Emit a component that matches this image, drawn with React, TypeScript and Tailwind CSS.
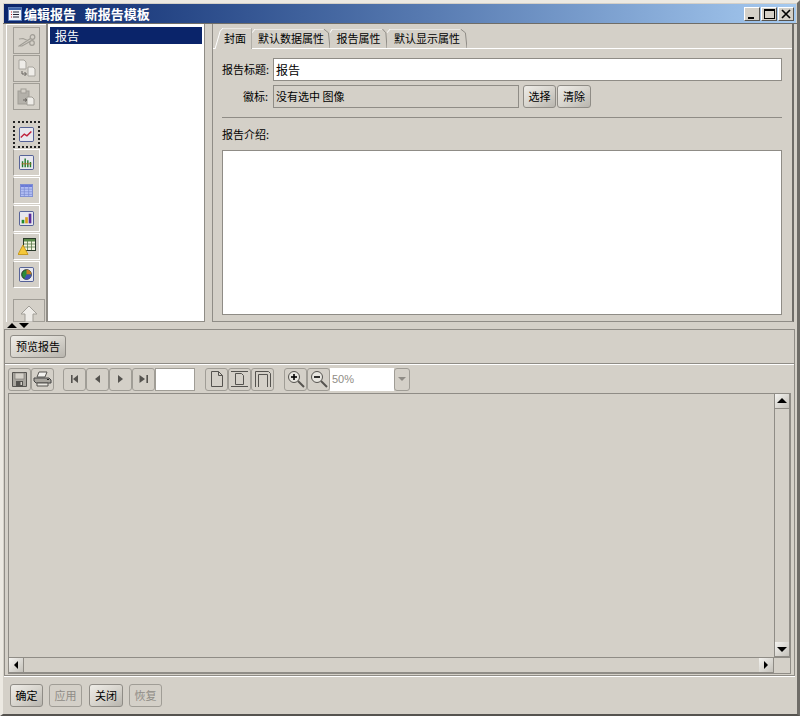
import type { ReactNode } from "react";

const font = { fontFamily: '"Noto Sans CJK SC", "Liberation Sans", sans-serif' };

function ToolBtn({ children, dotted, wide, enabled }: { children: ReactNode; dotted?: boolean; wide?: boolean; enabled?: boolean }) {
  const edge = dotted
    ? "border-2 border-dotted border-[#222]"
    : enabled
      ? "border border-white border-l-[#a09d96]"
      : "border border-[#a09d96]";
  return <div className={`${wide ? "w-[32px] h-[23px]" : "w-[27px] h-[27px]"} flex items-center justify-center ${edge}`}>{children}</div>;
}

function GrayBtn({ children, w = "w-[23px]" }: { children: ReactNode; w?: string }) {
  return (
    <div className={`${w} h-[23px] shrink-0 flex items-center justify-center rounded-[3px] border border-[#a09d96]`}>
      {children}
    </div>
  );
}

function TextBtn({ label, w, disabled }: { label: string; w: string; disabled?: boolean }) {
  return (
    <div
      className={`${w} h-[23px] shrink-0 flex items-center justify-center rounded-[3px] border text-[11px] ${
        disabled
          ? "border-[#a09d96] text-[#8f8c86]"
          : "border-[#8f8c86] text-black bg-gradient-to-br from-[#eeece7] via-[#d8d5ce] to-[#b8b5ae]"
      }`}
    >
      {label}
    </div>
  );
}

function Tab({ label, w, active }: { label: string; w: string; active?: boolean }) {
  return (
    <div className={`relative ${w} ${active ? "h-[21px] -mb-px z-10 bg-[#d4d0c8] pl-[3px] pb-[3px]" : "h-[19px] pb-[2px]"} flex items-end justify-center text-[11px] text-black`}>
      <svg className="absolute inset-0 w-full h-full" preserveAspectRatio="none" viewBox="0 0 100 20">
        <path d={active ? "M0 20 L14 3 L22 0 L100 0" : "M0 4 L4 0 L92 0"} fill="none" stroke="#fff" strokeWidth="1" vectorEffect="non-scaling-stroke" />
        <path d={active ? "M100 0 L100 20" : "M92 0 L98 4 L100 20"} fill="none" stroke="#8f8c86" strokeWidth="1" vectorEffect="non-scaling-stroke" />
      </svg>
      <span className="relative">{label}</span>
    </div>
  );
}

function Arrow({ dir }: { dir: "left" | "right" | "up" | "down" }) {
  const d = { left: "M7 1 L3 5 L7 9 Z", right: "M3 1 L7 5 L3 9 Z", up: "M0 7 L5 2 L10 7 Z", down: "M0 3 L5 8 L10 3 Z" }[dir];
  return (
    <svg width="10" height="10" viewBox="0 0 10 10">
      <path d={d} fill="#000" />
    </svg>
  );
}

function ScrollBtn({ dir }: { dir: "left" | "right" | "up" | "down" }) {
  return (
    <div className="w-[15px] h-[15px] shrink-0 flex items-center justify-center bg-gradient-to-br from-[#f4f3f0] to-[#c4c1ba] border-r border-b border-[#8f8c86]">
      <Arrow dir={dir} />
    </div>
  );
}

export default function App() {
  return (
    <div
      style={font}
      className="w-[800px] h-[716px] bg-[#d4d0c8] flex flex-col overflow-hidden border-x-[3px] border-t-[3px] border-b-2 border-t-[#ece9e2] border-l-[#ece9e2] border-r-[#6f6d68] border-b-[#55534f]"
    >
      {/* Title bar */}
      <div className="mt-px mx-px h-[19px] shrink-0 flex items-center bg-gradient-to-r from-[#0a246a] to-[#a6caf0] pl-[4px] pr-[2px]">
        <svg width="14" height="14" viewBox="0 0 14 14">
          <rect x="0.5" y="0.5" width="13" height="13" fill="#f2f4fa" stroke="#5b7db8" />
          <rect x="1" y="1" width="12" height="2" fill="#3d63a8" />
          <path d="M3 5h1M3 7.5h1M3 10h1" stroke="#c22" />
          <path d="M5 5h6M5 7.5h6M5 10h6" stroke="#223" />
        </svg>
        <span className="ml-[2px] text-[13px] font-bold text-white whitespace-pre">编辑报告   新报告模板</span>
        <div className="ml-auto flex gap-px">
          <WinBtn>
            <div className="w-[6px] h-[2px] bg-black mt-[8px] -ml-[2px]" />
          </WinBtn>
          <WinBtn>
            <div className="w-[11px] h-[10px] border border-black border-t-2" />
          </WinBtn>
          <WinBtn>
            <svg width="10" height="10" viewBox="0 0 10 10">
              <path d="M1 1 L9 9 M9 1 L1 9" stroke="#000" strokeWidth="1.7" />
            </svg>
          </WinBtn>
        </div>
      </div>
      <div className="h-px bg-[#6f6d68] shrink-0" />

      {/* Top split */}
      <div className="h-[298px] shrink-0 flex pl-[3px] pr-[3px]">
        <div className="w-[40px] shrink-0 flex flex-col items-start pl-[6px] pt-[2px] overflow-hidden border-l border-t border-white">
          <div className="flex flex-col gap-px">
            <ToolBtn><ScissorsIcon /></ToolBtn>
            <ToolBtn><CopyIcon /></ToolBtn>
            <ToolBtn><PasteIcon /></ToolBtn>
          </div>
          <div className="flex flex-col gap-px mt-[11px]">
            <ToolBtn dotted><FrameIcon><path d="M2 12 L6 8 L9 10 L14 5" stroke="#c0203a" strokeWidth="1.6" fill="none" /></FrameIcon></ToolBtn>
            <ToolBtn enabled><FrameIcon><path d="M4 14V7M7 14V4M10 14V6M13 14V8" stroke="#1f7a2a" strokeWidth="1.6" /><path d="M3 10H14" stroke="#b06a20" /></FrameIcon></ToolBtn>
            <ToolBtn enabled><TableIcon /></ToolBtn>
            <ToolBtn enabled><FrameIcon><rect x="3" y="10" width="3" height="4" fill="#1f8a2a" /><rect x="7" y="7" width="3" height="7" fill="#d8a020" /><rect x="11" y="3" width="3" height="11" fill="#5a2a9a" /></FrameIcon></ToolBtn>
            <ToolBtn enabled><AlertTableIcon /></ToolBtn>
            <ToolBtn enabled><FrameIcon><circle cx="8.5" cy="8.5" r="5.5" fill="#2a8a3a" stroke="#222" /><path d="M8.5 8.5 L8.5 3 A5.5 5.5 0 0 1 14 8.5 Z" fill="#c87a20" /><path d="M8.5 8.5 L14 8.5 A5.5 5.5 0 0 1 6 13.5 Z" fill="#4050b0" /></FrameIcon></ToolBtn>
          </div>
          <div className="mt-[11px]">
            <ToolBtn wide>
              <svg width="18" height="18" viewBox="0 0 18 18" className="mt-[6px]">
                <path d="M9 1 L17 9 H13 V17 H5 V9 H1 Z" fill="#eeece8" stroke="#a09d96" />
              </svg>
            </ToolBtn>
          </div>
        </div>

        <div className="w-[2px] shrink-0 bg-[#8f8c86]" />
        <div className="w-[156px] shrink-0 bg-white p-[2px] pt-[3px] border-b border-[#8f8c86]">
          <div className="h-[17px] bg-[#0a246a] text-white text-[12px] leading-[17px] pl-[5px]">报告</div>
        </div>
        <div className="w-[8px] shrink-0 border-l border-[#8f8c86]" />

        {/* Tabbed panel */}
        <div className="flex-1 flex flex-col min-w-0 pt-[4px] border-b border-l border-[#8f8c86] border-r-2 border-r-[#6f6d68]">
          <div className="h-[21px] shrink-0 flex items-end pl-[2px] border-b border-white">
            <Tab label="封面" w="w-[37px]" active />
            <Tab label="默认数据属性" w="w-[78px]" />
            <Tab label="报告属性" w="w-[57px]" />
            <Tab label="默认显示属性" w="w-[80px]" />
          </div>
          <div className="flex-1 flex flex-col pl-[9px] pr-[10px] pt-[9px] pb-[6px] text-[11px] text-black">
            <div className="flex items-center h-[23px]">
              <span className="w-[46px] text-right shrink-0 whitespace-nowrap">报告标题:</span>
              <div className="ml-[5px] flex-1 h-[23px] bg-white border border-[#8f8c86] text-[12px] leading-[21px] pl-[2px]">报告</div>
            </div>
            <div className="flex items-center h-[23px] mt-[4px]">
              <span className="w-[46px] text-right shrink-0">徽标:</span>
              <div className="ml-[5px] w-[246px] h-[23px] border border-[#8f8c86] leading-[21px] pl-[2px]">没有选中 图像</div>
              <div className="ml-[4px] flex gap-px">
                <TextBtn label="选择" w="w-[33px]" />
                <TextBtn label="清除" w="w-[34px]" />
              </div>
            </div>
            <div className="h-px bg-[#8f8c86] mt-[9px] shrink-0" />
            <div className="mt-[9px] h-[15px] leading-[15px]">报告介绍:</div>
            <div className="mt-[8px] flex-1 bg-white border border-[#8f8c86]" />
          </div>
        </div>
      </div>

      {/* Split handle */}
      <div className="h-[7px] shrink-0 flex items-center pl-[3px]">
        <svg width="26" height="7" viewBox="0 0 26 7">
          <path d="M1 6 L6 1 L11 6 Z M13 1 L23 1 L18 6 Z" fill="#000" />
        </svg>
      </div>

      {/* Preview */}
      <div className="flex-1 flex flex-col min-h-0 ml-px mr-[2px] border border-[#8f8c86] shadow-[0_1px_0_#fff] pb-px">
        <div className="h-[34px] shrink-0 pl-[5px] pt-[5px] border-b border-[#8f8c86]">
          <TextBtn label="预览报告" w="w-[56px]" />
        </div>
        <div className="h-[29px] shrink-0 flex items-center pl-[3px] border-t border-white">
          <GrayBtn><SaveIcon /></GrayBtn>
          <GrayBtn><PrintIcon /></GrayBtn>
          <div className="w-[9px]" />
          <GrayBtn><Arrow2 d="M3 2v8h1.6V2zM10 2 L5 6 L10 10Z" /></GrayBtn>
          <GrayBtn><Arrow2 d="M9 2 L4 6 L9 10Z" /></GrayBtn>
          <GrayBtn><Arrow2 d="M4 2 L9 6 L4 10Z" /></GrayBtn>
          <GrayBtn><Arrow2 d="M9.4 2v8H11V2zM2.5 2 L8 6 L2.5 10Z" /></GrayBtn>
          <div className="w-[40px] h-[23px] bg-white border border-[#a09d96] shrink-0" />
          <div className="w-[10px]" />
          <GrayBtn><PageIcon /></GrayBtn>
          <GrayBtn><PageWidthIcon /></GrayBtn>
          <GrayBtn><PageFullIcon /></GrayBtn>
          <div className="w-[10px]" />
          <GrayBtn><ZoomIcon plus /></GrayBtn>
          <GrayBtn><ZoomIcon /></GrayBtn>
          <div className="w-[64px] h-[23px] bg-white text-[#8f8c86] text-[11px] leading-[23px] pl-[2px] shrink-0" style={{ fontFamily: '"Liberation Sans", sans-serif' }}>50%</div>
          <GrayBtn w="w-[16px]">
            <svg width="10" height="6" viewBox="0 0 10 6"><path d="M1 1 L9 1 L5 5 Z" fill="#8f8c86" /></svg>
          </GrayBtn>
        </div>
        <div className="flex-1 min-h-0 flex flex-col mx-[3px] border border-[#8f8c86]">
          <div className="flex-1 min-h-0 flex">
            <div className="flex-1" />
            <div className="w-[16px] shrink-0 flex flex-col border-l border-[#8f8c86]">
              <ScrollBtn dir="up" />
              <div className="flex-1 border-r border-[#8f8c86] w-[15px]" />
              <ScrollBtn dir="down" />
            </div>
          </div>
          <div className="h-[16px] shrink-0 flex border-t border-[#8f8c86]">
            <ScrollBtn dir="left" />
            <div className="flex-1 border-b border-[#8f8c86]" />
            <ScrollBtn dir="right" />
            <div className="w-[16px] shrink-0" />
          </div>
        </div>
      </div>

      {/* Footer */}
      <div className="h-[38px] shrink-0 flex items-start pt-[8px] pl-[7px]">
        <TextBtn label="确定" w="w-[33px]" />
        <div className="ml-[6px]"><TextBtn label="应用" w="w-[33px]" disabled /></div>
        <div className="ml-[7px]"><TextBtn label="关闭" w="w-[34px]" /></div>
        <div className="ml-[6px]"><TextBtn label="恢复" w="w-[33px]" disabled /></div>
      </div>
    </div>
  );
}

function WinBtn({ children }: { children: ReactNode }) {
  return (
    <div className="w-[16px] h-[14px] flex items-center justify-center bg-[#d4d0c8] border-t border-l border-t-white border-l-white border-r border-b border-r-[#55534f] border-b-[#55534f]">
      {children}
    </div>
  );
}

function Arrow2({ d }: { d: string }) {
  return (
    <svg width="13" height="12" viewBox="0 0 13 12">
      <path d={d} fill="#55534f" />
    </svg>
  );
}

function FrameIcon({ children }: { children: ReactNode }) {
  return (
    <svg width="15" height="15" viewBox="0 0 17 17">
      <rect x="0.5" y="0.5" width="16" height="16" rx="1.5" fill="#e8e8ee" stroke="#3a4a8a" />
      {children}
    </svg>
  );
}

function ScissorsIcon() {
  return (
    <svg width="18" height="14" viewBox="0 0 18 14" fill="none" stroke="#a09d96" strokeWidth="1.2">
      <circle cx="14.5" cy="3" r="2.3" />
      <circle cx="14" cy="9" r="2.3" />
      <path d="M12.5 4.5 L1 12 L4 12 L12 7.5 M12 7.5 L5 4.5 L1 5" />
    </svg>
  );
}

function CopyIcon() {
  return (
    <svg width="18" height="20" viewBox="0 0 18 20">
      <path d="M1 1h5l2 2v7H1z" fill="#eeece8" stroke="#a8a59e" />
      <path d="M10 8h5l2 2v7h-7z" fill="#eeece8" stroke="#a8a59e" />
      <path d="M4 12v3h4M6.5 13 L8.5 15 L6.5 17" fill="none" stroke="#66635e" />
    </svg>
  );
}

function PasteIcon() {
  return (
    <svg width="19" height="18" viewBox="0 0 19 18">
      <rect x="1" y="3" width="11" height="13" fill="#b4b1aa" stroke="#a09d96" />
      <rect x="4" y="1" width="5" height="4" fill="#d4d0c8" stroke="#a09d96" />
      <path d="M10 9h5l2 2v6h-7z" fill="#eeece8" stroke="#a09d96" />
      <path d="M6 12h3M8 10.5 L10 12 L8 13.5" fill="none" stroke="#66635e" />
    </svg>
  );
}

function TableIcon() {
  return (
    <svg width="13" height="13" viewBox="0 0 15 15">
      <rect x="0.5" y="0.5" width="14" height="14" fill="#b4c0f4" stroke="#7a8ad0" />
      <rect x="1" y="1" width="13" height="2.5" fill="#6a7ad8" />
      <path d="M5 1v13M10 1v13M1 6h13M1 9h13M1 12h13" stroke="#7a8ad0" strokeWidth="0.8" />
    </svg>
  );
}

function AlertTableIcon() {
  return (
    <svg width="18" height="17" viewBox="0 0 18 17">
      <rect x="5.5" y="0.5" width="12" height="12" fill="#f4f4e0" stroke="#2a3a2a" />
      <rect x="6" y="1" width="11" height="2.5" fill="#5a8a4a" />
      <path d="M9.5 3v9M13.5 3v9M6 6h11M6 9h11" stroke="#5a7a4a" strokeWidth="0.8" />
      <path d="M5 7 L10 16.5 H0 Z" fill="#f4c83a" stroke="#c89a20" />
    </svg>
  );
}

function SaveIcon() {
  return (
    <svg width="15" height="15" viewBox="0 0 15 15">
      <path d="M0.5 0.5h14v14h-14z" fill="#a8a59e" stroke="#55534f" />
      <rect x="3" y="1" width="9" height="6" fill="#d4d0c8" stroke="#77746e" strokeWidth="0.6" />
      <rect x="4" y="9" width="7" height="5" fill="#55534f" />
      <rect x="8.5" y="10" width="1.5" height="3" fill="#d4d0c8" />
    </svg>
  );
}

function PrintIcon() {
  return (
    <svg width="19" height="16" viewBox="0 0 19 16">
      <path d="M6 1h8l-2 5H4z" fill="#f4f3f0" stroke="#55534f" />
      <path d="M1 7h15l2 2v3H3L1 10z" fill="#a8a59e" stroke="#444" />
      <path d="M4 12h11v3H4z" fill="#e8e6e0" stroke="#55534f" />
      <path d="M14 8.5h2" stroke="#222" />
    </svg>
  );
}

function PageIcon() {
  return (
    <svg width="14" height="16" viewBox="0 0 14 16" fill="none" stroke="#55534f">
      <path d="M1.5 0.5h7l4 4v11h-11z" />
      <path d="M8.5 0.5v4h4" />
    </svg>
  );
}

function PageWidthIcon() {
  return (
    <svg width="19" height="16" viewBox="0 0 19 16" fill="none" stroke="#55534f">
      <path d="M1 15.5h17M1 0.5h17" />
      <path d="M5.5 2.5h6l2 2v9h-8z" />
    </svg>
  );
}

function PageFullIcon() {
  return (
    <svg width="18" height="16" viewBox="0 0 18 16" fill="none" stroke="#55534f">
      <path d="M1.5 16V0.5h13l2 2V16" />
      <path d="M4.5 16V3.5h9V16" />
    </svg>
  );
}

function ZoomIcon({ plus }: { plus?: boolean }) {
  return (
    <svg width="18" height="18" viewBox="0 0 18 18">
      <circle cx="7" cy="7" r="5.5" fill="#e8e6e0" stroke="#55534f" />
      <path d="M4 7h6" stroke="#000" strokeWidth="1.6" />
      {plus && <path d="M7 4v6" stroke="#000" strokeWidth="1.6" />}
      <path d="M11 11 L17 17" stroke="#55534f" strokeWidth="2" />
    </svg>
  );
}
